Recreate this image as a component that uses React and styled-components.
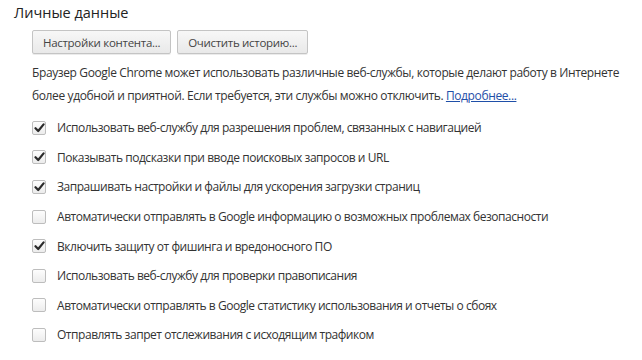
import React from "react";
import styled, { createGlobalStyle } from "styled-components";

const Global = createGlobalStyle`
  html, body {
    margin: 0;
    background: #fff;
  }
  body {
    font-family: "Open Sans", "Noto Sans", sans-serif;
    color: #333;
  }
`;

const Section = styled.section`
  padding: 3px 0 0 14px;
`;

const Heading = styled.h3`
  margin: 0;
  font-size: 14.5px;
  font-weight: 400;
  line-height: 20px;
  color: #222;
`;

const Body = styled.div`
  padding-left: 18px;
`;

const ButtonRow = styled.div`
  display: flex;
  gap: 6px;
  margin-top: 7px;
`;

const Button = styled.button`
  height: 24px;
  padding: 0 10px;
  font-family: inherit;
  font-size: 11.5px;
  letter-spacing: -0.3px;
  color: #444;
  background: linear-gradient(#f7f7f7, #e9e9e9);
  border: 1px solid #c4c4c4;
  border-radius: 2px;
  box-shadow: 0 1px 0 rgba(0, 0, 0, 0.08);
`;

const Text = styled.p`
  margin: 7px 0 0;
  font-size: 12px;
  letter-spacing: -0.38px;
  line-height: 23px;
  color: #333;
  white-space: nowrap;
`;

const Link = styled.a`
  color: #1f4fa8;
  text-decoration: underline;
`;

const List = styled.div`
  margin-top: 6px;
  display: flex;
  flex-direction: column;
`;

const Row = styled.label`
  display: flex;
  align-items: center;
  gap: 11px;
  height: 29.6px;
  font-size: 12px;
  letter-spacing: -0.46px;
  color: #333;
`;

const Box = styled.span`
  width: 12px;
  height: 12px;
  flex: none;
  border: 1px solid #bdbdbd;
  border-radius: 2px;
  background: linear-gradient(#fdfdfd, #ececec);
  display: flex;
  align-items: center;
  justify-content: center;
`;

const Check = () => (
  <svg width="11" height="10" viewBox="0 0 11 10">
    <path d="M1.5 5.2 L4.2 8 L9.6 1.4" fill="none" stroke="#2a2a2a" strokeWidth="2.2" strokeLinecap="round" strokeLinejoin="round" />
  </svg>
);

const items = [
  ["Использовать веб-службу для разрешения проблем, связанных с навигацией", true],
  ["Показывать подсказки при вводе поисковых запросов и URL", true],
  ["Запрашивать настройки и файлы для ускорения загрузки страниц", true],
  ["Автоматически отправлять в Google информацию о возможных проблемах безопасности", false],
  ["Включить защиту от фишинга и вредоносного ПО", true],
  ["Использовать веб-службу для проверки правописания", false],
  ["Автоматически отправлять в Google статистику использования и отчеты о сбоях", false],
  ["Отправлять запрет отслеживания с исходящим трафиком", false],
];

export default function App() {
  return (
    <>
      <Global />
      <Section>
        <Heading>Личные данные</Heading>
        <Body>
          <ButtonRow>
            <Button>Настройки контента...</Button>
            <Button>Очистить историю...</Button>
          </ButtonRow>
          <Text>
            Браузер Google Chrome может использовать различные веб-службы, которые делают работу в Интернете
            <br />
            более удобной и приятной. Если требуется, эти службы можно отключить. <Link href="#">Подробнее...</Link>
          </Text>
          <List>
            {items.map(([label, on], i) => (
              <Row key={i}>
                <Box>{on && <Check />}</Box>
                {label}
              </Row>
            ))}
          </List>
        </Body>
      </Section>
    </>
  );
}
